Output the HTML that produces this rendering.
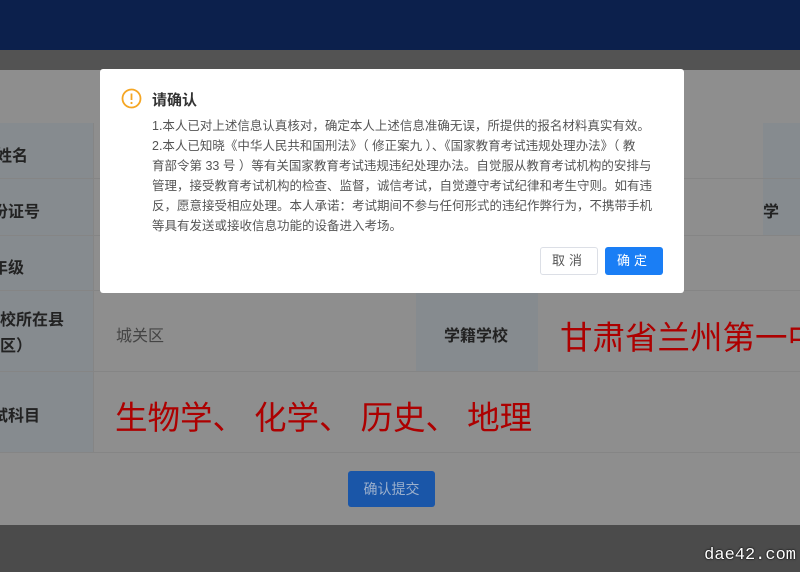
<!DOCTYPE html>
<html><head><meta charset="utf-8"><style>
*{margin:0;padding:0;box-sizing:border-box}
body{width:800px;height:572px;overflow:hidden;position:relative;background:#4b4b4b;font-family:"Liberation Sans","Noto Sans CJK SC",sans-serif}
.a{position:absolute}
.hdr{left:0;top:0;width:800px;height:50px;background:#0c204c}
.band{left:0;top:50px;width:800px;height:20px;background:#535353}
.main{left:0;top:70px;width:800px;height:455px;background:#8e8e8e}
.lab{background:#868b8f}
.ln{background:#858585}
.lt{font-size:16px;font-weight:bold;color:#222}
.red{color:#ad0000}
.btn{left:348px;top:471px;width:87px;height:36px;background:#1a56a8;border-radius:3px;color:#9cb0cc;font-size:14px;text-align:center;line-height:36px}
.dlg{left:100px;top:69px;width:584px;height:224px;background:#fff;border-radius:3px}
.body{left:52px;top:47px;font-size:12.5px;line-height:20px;color:#555;white-space:nowrap}
.wm{right:4px;top:546px;font-family:"Liberation Mono",monospace;font-size:17px;color:#fff;text-shadow:0 0 2px #000,0 0 1px #000}
</style></head><body>
<div class="a hdr"></div>
<div class="a band"></div>
<div class="a main"></div>
<div class="a lab" style="left:0;top:123px;width:93px;height:329px"></div>
<div class="a lab" style="left:763px;top:123px;width:37px;height:112px"></div>
<div class="a lab" style="left:416px;top:290px;width:122px;height:81px"></div>
<div class="a ln" style="left:0;top:178px;width:800px;height:1px"></div>
<div class="a ln" style="left:0;top:235px;width:800px;height:1px"></div>
<div class="a ln" style="left:0;top:290px;width:800px;height:1px"></div>
<div class="a ln" style="left:0;top:371px;width:800px;height:1px"></div>
<div class="a ln" style="left:0;top:452px;width:800px;height:1px"></div>
<div class="a ln" style="left:93px;top:123px;width:1px;height:329px"></div>
<div class="a lt" style="left:-4px;top:142px">姓名</div>
<div class="a lt" style="left:-8px;top:198px">份证号</div>
<div class="a lt" style="left:763px;top:198px">学</div>
<div class="a lt" style="left:-8px;top:254px">年级</div>
<div class="a lt" style="left:0;top:308px;line-height:26px">校所在县<br>区）</div>
<div class="a" style="left:116px;top:322px;font-size:16px;color:#444">城关区</div>
<div class="a lt" style="left:444px;top:322px">学籍学校</div>
<div class="a red" style="left:560px;top:312px;font-size:32.5px;white-space:nowrap">甘肃省兰州第一中</div>
<div class="a lt" style="left:-8px;top:402px">试科目</div>
<div class="a red" style="left:115px;top:392px;font-size:32.5px;white-space:nowrap">生物学、 化学、 历史、 地理</div>
<div class="a btn">确认提交</div>
<div class="a dlg">
 <svg class="a" style="left:21px;top:19px" width="21" height="21" viewBox="0 0 21 21"><circle cx="10.5" cy="10.5" r="9" fill="none" stroke="#f5a623" stroke-width="1.8"/><line x1="10.5" y1="5.5" x2="10.5" y2="12" stroke="#f5a623" stroke-width="1.8"/><circle cx="10.5" cy="15" r="1.1" fill="#f5a623"/></svg>
 <div class="a" style="left:52px;top:20px;font-size:15px;font-weight:bold;color:#333">请确认</div>
 <div class="a body">1.本人已对上述信息认真核对，确定本人上述信息准确无误，所提供的报名材料真实有效。<br>2.本人已知晓《中华人民共和国刑法》（ 修正案九 ）、《国家教育考试违规处理办法》（ 教<br>育部令第 33 号 ）等有关国家教育考试违规违纪处理办法。自觉服从教育考试机构的安排与<br>管理，接受教育考试机构的检查、监督，诚信考试，自觉遵守考试纪律和考生守则。如有违<br>反，愿意接受相应处理。本人承诺：考试期间不参与任何形式的违纪作弊行为，不携带手机<br>等具有发送或接收信息功能的设备进入考场。</div>
 <div class="a" style="left:440px;top:178px;width:58px;height:28px;border:1px solid #dcdfe6;border-radius:3px;font-size:13px;color:#555;text-align:center;line-height:26px;letter-spacing:4px">取消</div>
 <div class="a" style="left:505px;top:178px;width:58px;height:28px;background:#1a7ef5;border-radius:3px;font-size:13px;color:#fff;text-align:center;line-height:28px;letter-spacing:4px">确定</div>
</div>
<div class="a wm">dae42.com</div>
</body></html>
